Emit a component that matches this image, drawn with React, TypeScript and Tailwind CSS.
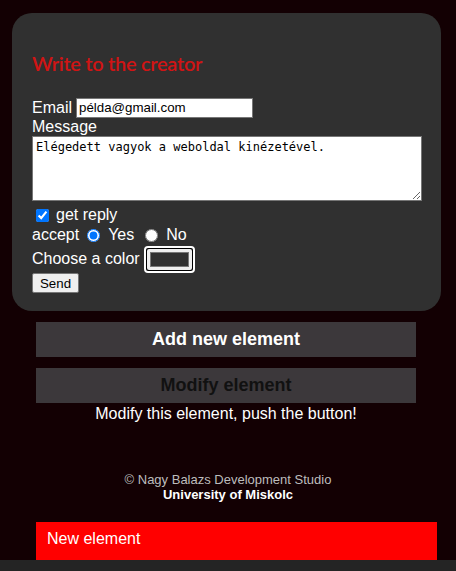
import { ReactNode } from "react";

function Row(props: { children: ReactNode; className?: string }) {
  return <div className={`flex items-center ${props.className ?? ""}`}>{props.children}</div>;
}

function ColorPicker() {
  return (
    <div className="ml-[4px] w-[51px] h-[27px] border-2 border-white rounded-[4px] bg-black p-[1px]">
      <div className="w-full h-full bg-[#efefef] rounded-[2px] p-[3px]">
        <div className="w-full h-full bg-[#303030] border border-[#777]" />
      </div>
    </div>
  );
}

function ContactForm() {
  return (
    <div className="ml-[12px] w-[429px] bg-[#303030] rounded-[20px] pl-[20px] pr-[20px] pt-[38px] pb-[18px] text-white text-[16px]">
      <h2 className="font-['Lato',sans-serif] font-semibold text-[20px] leading-[24px] text-[#d01414] tracking-[-0.3px]">
        Write to the creator
      </h2>
      <Row className="mt-[22px] h-[21px]">
        <span className="leading-[18px]">Email</span>
        <input
          className="ml-[4px] w-[177px] h-[20px] bg-white text-black text-[13.3px] px-[2px] border border-[#767676] outline-none"
          defaultValue="példa@gmail.com"
        />
      </Row>
      <div className="leading-[18px]">Message</div>
      <textarea
        className="block w-[390px] h-[65px] bg-white text-black border border-[#767676] font-['DejaVu_Sans_Mono',monospace] text-[12px] leading-[15px] px-[3px] py-[3px] outline-none"
        defaultValue="Elégedett vagyok a weboldal kinézetével."
      />
      <Row className="mt-[4px] h-[20px]">
        <input type="checkbox" defaultChecked className="ml-[4px] w-[13px] h-[13px] accent-[#0075ff]" />
        <span className="ml-[7px]">get reply</span>
      </Row>
      <Row className="h-[20px]">
        <span>accept</span>
        <input type="radio" name="acc" defaultChecked className="ml-[8px] w-[13px] h-[13px] accent-[#0075ff]" />
        <span className="ml-[8px]">Yes</span>
        <input type="radio" name="acc" className="ml-[11px] w-[13px] h-[13px]" />
        <span className="ml-[8px]">No</span>
      </Row>
      <Row className="h-[28px]">
        <span>Choose a color</span>
        <ColorPicker />
      </Row>
      <button className="block h-[20px] px-[7px] bg-[#efefef] text-black text-[13.3px] leading-[15px] border border-[#767676] rounded-[2px]">
        Send
      </button>
    </div>
  );
}

export default function App() {
  return (
    <div className="min-h-[571px] bg-[#130003] font-['Liberation_Sans',Arial,sans-serif] pt-[13px] pb-[20px]">
      <ContactForm />
      <div className="mx-[36px] w-[380px] mt-[11px] flex flex-col">
        <button className="h-[35px] bg-[#3c383b] text-white font-bold text-[18px]">Add new element</button>
        <button className="mt-[11px] h-[35px] bg-[#3c383b] text-[#111] font-bold text-[18px]">Modify element</button>
        <p className="text-white text-[16px] leading-[19px] text-center mt-[1px]">Modify this element, push the button!</p>
      </div>
      <footer className="mt-[49px] text-center text-[13px] leading-[15px]">
        <div className="text-[#bdbdbd]">© Nagy Balazs Development Studio</div>
        <div className="text-white font-bold">University of Miskolc</div>
      </footer>
      <div className="ml-[36px] w-[401px] mt-[20px] h-[50px] bg-[#ff0000] text-white text-[16px] px-[11px] pt-[5px]">
        New element
      </div>
      <div className="fixed left-0 right-0 bottom-0 h-[11px] bg-[#242424]" />
    </div>
  );
}
